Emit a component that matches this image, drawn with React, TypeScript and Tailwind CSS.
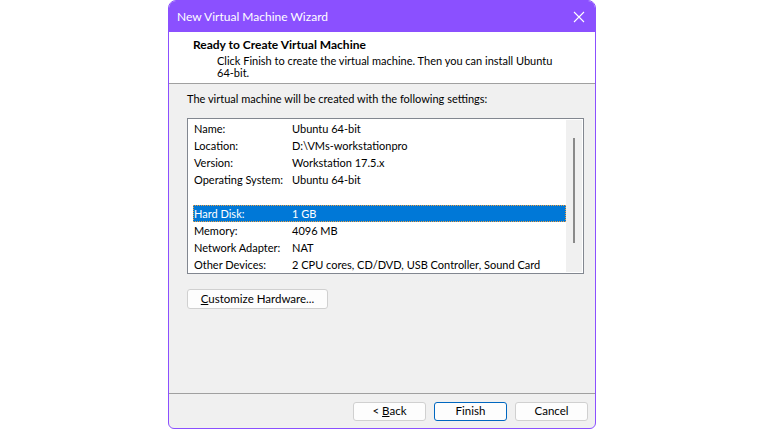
import React from 'react';

const rows = [
  { label: 'Name:', value: 'Ubuntu 64-bit' },
  { label: 'Location:', value: 'D:\\VMs-workstationpro' },
  { label: 'Version:', value: 'Workstation 17.5.x' },
  { label: 'Operating System:', value: 'Ubuntu 64-bit' },
  { label: '', value: '' },
  { label: 'Hard Disk:', value: '1 GB', selected: true },
  { label: 'Memory:', value: '4096 MB' },
  { label: 'Network Adapter:', value: 'NAT' },
  { label: 'Other Devices:', value: '2 CPU cores, CD/DVD, USB Controller, Sound Card' },
];

function WinButton({ children, primary }: { children: React.ReactNode; primary?: boolean }) {
  return (
    <button
      className={
        'w-[73px] h-[19px] rounded-[3px] bg-[#fdfdfd] text-[11.5px] leading-none text-black flex items-center justify-center whitespace-nowrap ' +
        (primary ? 'border border-[#0067c0]' : 'border border-[#d0d0d0]')
      }
    >
      {children}
    </button>
  );
}

export default function App() {
  return (
    <div
      className="w-[764px] h-[430px] bg-white flex justify-center overflow-hidden whitespace-nowrap"
      style={{ fontFamily: 'Lato, "Noto Sans", sans-serif' }}
    >
      <div className="w-[428px] h-[429px] flex flex-col bg-[#f0f0f0] border border-[#8b50ff] rounded-t-[8px] rounded-b-[6px] overflow-hidden">
        {/* Title bar */}
        <div className="h-[31px] shrink-0 bg-[#8b50ff] flex items-center justify-between pl-[8px] pr-[10px] text-white">
          <span className="text-[12px]">New Virtual Machine Wizard</span>
          <svg width="12" height="12" viewBox="0 0 12 12" className="text-white">
            <path d="M1 1L11 11M11 1L1 11" stroke="currentColor" strokeWidth="1.1" />
          </svg>
        </div>

        {/* Header */}
        <div className="h-[52px] shrink-0 bg-white border-b border-[#a0a0a0] pt-[6px] pl-[24px] text-[11px] text-black">
          <div className="font-bold text-[12px] leading-[14px]">Ready to Create Virtual Machine</div>
          <div className="pl-[24px] leading-[12px] mt-[3px]">
            <div>Click Finish to create the virtual machine. Then you can install Ubuntu</div>
            <div>64-bit.</div>
          </div>
        </div>

        {/* Body */}
        <div className="flex-1 pl-[18px] pr-[11px] pt-[7px] text-[11px] text-black">
          <div className="leading-[15px]">The virtual machine will be created with the following settings:</div>
          <div className="mt-[12px] h-[156px] bg-white border border-[#828790] flex">
            <div className="flex-1 pt-[1px] pl-[5px]">
              {rows.map((r, i) => (
                <div
                  key={i}
                  className={
                    'h-[17px] flex items-center leading-none ' +
                    (r.selected ? 'bg-[#0078d7] text-white outline outline-1 outline-dotted outline-[#f0a040] -outline-offset-1' : '')
                  }
                >
                  <span className="w-[99px] shrink-0 pl-[1px]">{r.label}</span>
                  <span>{r.value}</span>
                </div>
              ))}
            </div>
            <div className="w-[16px] shrink-0 bg-[#f0f0f0] my-[1px] mr-[1px] flex justify-center pt-[18px]">
              <div className="w-[2px] h-[105px] bg-[#8a8a8a]" />
            </div>
          </div>
          <button className="mt-[15px] w-[141px] h-[20px] rounded-[3px] bg-[#fdfdfd] border border-[#d0d0d0] text-[11.5px] leading-none flex items-center justify-center">
            <span>
              <span className="underline">C</span>ustomize Hardware...
            </span>
          </button>
        </div>

        {/* Footer */}
        <div className="h-[35px] shrink-0 border-t border-[#a0a0a0] flex items-center justify-end gap-[8px] pr-[7px]">
          <WinButton>
            &lt; <span className="underline ml-[3px]">B</span>ack
          </WinButton>
          <WinButton primary>Finish</WinButton>
          <WinButton>Cancel</WinButton>
        </div>
      </div>
    </div>
  );
}
